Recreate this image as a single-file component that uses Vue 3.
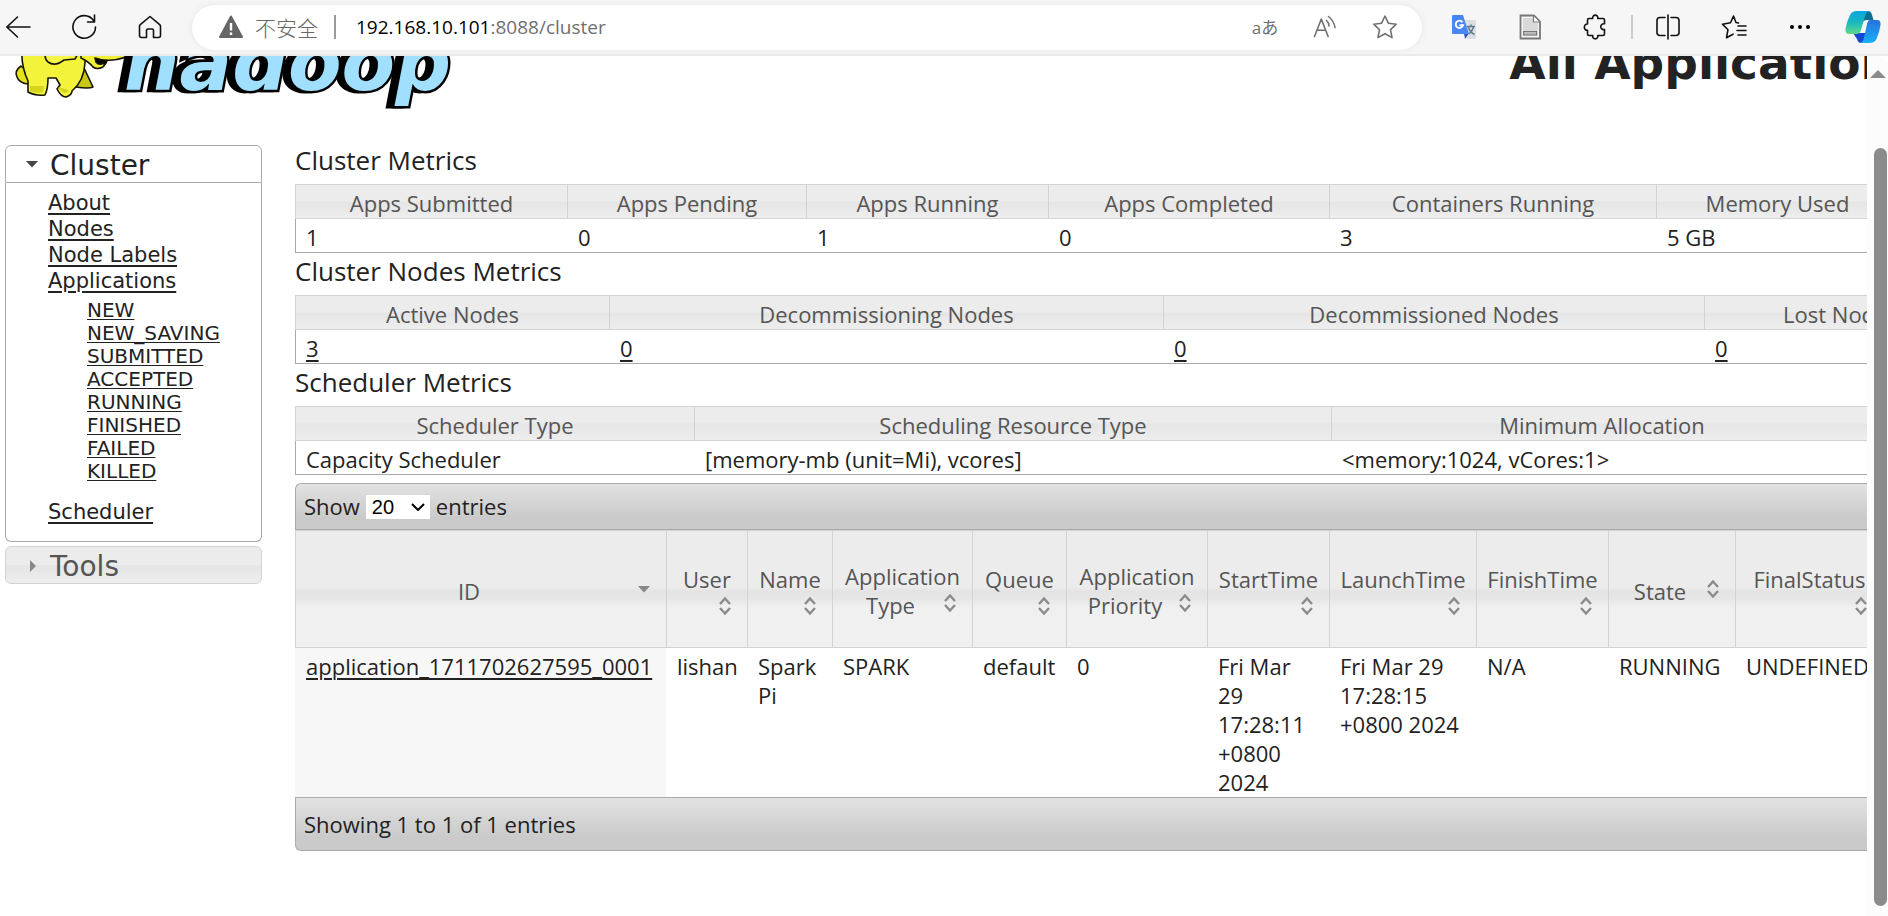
<script setup>
import { ref } from 'vue'

const pageSize = ref('20')

const clusterLinks = ['About', 'Nodes', 'Node Labels', 'Applications']
const stateLinks = ['NEW', 'NEW_SAVING', 'SUBMITTED', 'ACCEPTED', 'RUNNING', 'FINISHED', 'FAILED', 'KILLED']

const metrics = [
  {
    title: 'Cluster Metrics',
    columns: [
      { name: 'Apps Submitted', value: '1', width: 272 },
      { name: 'Apps Pending', value: '0', width: 239 },
      { name: 'Apps Running', value: '1', width: 242 },
      { name: 'Apps Completed', value: '0', width: 281 },
      { name: 'Containers Running', value: '3', width: 327 },
      { name: 'Memory Used', value: '5 GB', width: 242 }
    ]
  },
  {
    title: 'Cluster Nodes Metrics',
    linked: true,
    columns: [
      { name: 'Active Nodes', value: '3', width: 314 },
      { name: 'Decommissioning Nodes', value: '0', width: 554 },
      { name: 'Decommissioned Nodes', value: '0', width: 541 },
      { name: 'Lost Nodes', value: '0', width: 272 }
    ]
  },
  {
    title: 'Scheduler Metrics',
    columns: [
      { name: 'Scheduler Type', value: 'Capacity Scheduler', width: 399 },
      { name: 'Scheduling Resource Type', value: '[memory-mb (unit=Mi), vcores]', width: 637 },
      { name: 'Minimum Allocation', value: '<memory:1024, vCores:1>', width: 541 }
    ]
  }
]

// "top" lines sit above the row that holds the sort arrow; "side" shares that row.
const appColumns = [
  { top: '', side: 'ID', width: 371, sorted: true },
  { top: 'User', side: '', width: 81 },
  { top: 'Name', side: '', width: 85 },
  { top: 'Application', side: 'Type', width: 140 },
  { top: 'Queue', side: '', width: 94 },
  { top: 'Application', side: 'Priority', width: 141 },
  { top: 'StartTime', side: '', width: 122 },
  { top: 'LaunchTime', side: '', width: 147 },
  { top: 'FinishTime', side: '', width: 132 },
  { top: '', side: 'State', width: 127 },
  { top: 'FinalStatus', side: '', width: 148 }
]
const appCells = [
  ['lishan'],
  ['Spark', 'Pi'],
  ['SPARK'],
  ['default'],
  ['0'],
  ['Fri Mar', '29', '17:28:11', '+0800', '2024'],
  ['Fri Mar 29', '17:28:15', '+0800 2024'],
  ['N/A'],
  ['RUNNING'],
  ['UNDEFINED']
]
</script>

<template>
  <div class="browser">
    <header class="toolbar">
      <nav class="nav-group" aria-label="Browser navigation">
        <button class="tool" aria-label="Back">
          <svg width="26" height="24" viewBox="0 0 26 24" class="line"><path d="M25 12H2M12.500 2 1.800 12l10.700 10" /></svg>
        </button>
        <button class="tool" aria-label="Refresh">
          <svg width="26" height="26" viewBox="0 0 26 26" class="line"><path d="M22.500 6.500A11.300 11.300 0 1 0 24.500 13M23.500 1v7h-7" /></svg>
        </button>
        <button class="tool" aria-label="Home">
          <svg width="24" height="24" viewBox="0 0 24 24" class="line"><path d="M12 1.500 2.300 9.600Q1.500 10.300 1.500 11.500V20.500Q1.500 22.500 3.500 22.500H8.500V15.500Q8.500 14 10 14h4q1.500 0 1.500 1.500v7H20.500Q22.500 22.500 22.500 20.500V11.500q0-1.200-.8-1.900z" /></svg>
        </button>
      </nav>
      <div class="address">
        <svg class="warn" width="26" height="24" viewBox="0 0 26 24"><path d="M13 1.500 24 22H2z" fill="#666" stroke="#666" stroke-width="2" stroke-linejoin="round" /><path d="M13 8v7.500M13 17.500v2.500" stroke="#fff" stroke-width="2.400" /></svg>
        <span class="insecure">不安全</span>
        <span class="bar"></span>
        <a class="url" href="#">192.168.10.101<span>:8088/cluster</span></a>
        <div class="address-actions">
          <button class="tool translate" aria-label="Translate page">aあ</button>
          <button class="tool" aria-label="Read aloud">
            <svg width="26" height="26" viewBox="0 0 26 26" class="line grey"><path d="M2.500 22.500 9.300 5l6.800 17.500M5 16.300h8.700M14.500 6.500q2.500 2 2.500 5.500M16.500 2.500q5.500 4.500 6.500 11" /></svg>
          </button>
          <button class="tool" aria-label="Add to favorites">
            <svg width="26" height="26" viewBox="0 0 26 26" class="line grey"><path d="M13 2l3.400 7.200 7.900 1-5.800 5.500 1.500 7.900-7-3.800-7 3.800 1.500-7.900L1.700 10.200l7.900-1z" /></svg>
          </button>
        </div>
      </div>
      <div class="extensions">
        <button class="tool" aria-label="Google Translate">
          <svg width="26" height="26" viewBox="0 0 26 26"><path d="M11 6h13q1 0 1 1v17q0 1-1 1H16z" fill="#dcdee1" /><path d="M13 19h5l-4 6z" fill="#2a4fc4" /><path d="M2 1h10l6 19H2q-1 0-1-1V2q0-1 1-1z" fill="#4787f3" /><path d="M11.500 8.200A3.700 3.700 0 1 0 12 11.300H8.500" fill="none" stroke="#fff" stroke-width="1.900" /><path d="M16 12.500h8M20 10.500v2M17.500 13q1 5 6 7.500M22.500 13q-1 4-4.500 7" fill="none" stroke="#607d8b" stroke-width="1.500" /></svg>
        </button>
        <button class="tool" aria-label="Document extension">
          <svg width="24" height="26" viewBox="0 0 24 26"><path d="M2.500 1.500h13.500l6 6v17h-19.500z" fill="#f5f5f5" stroke="#777" stroke-width="1.800" /><path d="M5 4h10v5h5v13H5z" fill="#d9d9d9" /><path d="M15.500 2v6H21" fill="#fff" stroke="#777" stroke-width="1.200" /><rect x="5.500" y="17.500" width="13" height="3.500" fill="#bbb" stroke="#777" /></svg>
        </button>
        <button class="tool" aria-label="Extensions">
          <svg width="26" height="26" viewBox="0 0 26 26" class="line"><path d="M6 4.500H9.700C9 0 15.500 0 14.800 4.500H20Q21.500 4.500 21.500 6V9.800C16.500 9 16.500 16.500 21.500 15.500V20Q21.500 21.500 20 21.500H14.800C15.500 26 9 26 9.700 21.500H6Q4.500 21.500 4.500 20V16.300C.3 16.500 .3 9.800 4.500 10V6Q4.500 4.500 6 4.500z" /></svg>
        </button>
        <span class="divider"></span>
        <button class="tool" aria-label="Split screen">
          <svg width="26" height="26" viewBox="0 0 26 26" class="line"><path d="M13 1v24M10 3.500H5Q2 3.500 2 6.500v12Q2 21.500 5 21.500h5M16 3.500h5q3 0 3 3v12q0 3-3 3h-5" /></svg>
        </button>
        <button class="tool" aria-label="Favorites">
          <svg width="26" height="26" viewBox="0 0 26 26" class="line"><path d="M17.500 9 15 8.500 12.500 2 9.500 8.800 1.500 10.200l5.500 5.500-1.500 8 6.500-3.500M17 12h8M16 16.500h9M17 21h8" /></svg>
        </button>
        <button class="tool" aria-label="Settings and more">
          <svg width="24" height="8" viewBox="0 0 24 8"><circle cx="4" cy="4" r="2" /><circle cx="12" cy="4" r="2" /><circle cx="20" cy="4" r="2" /></svg>
        </button>
        <button class="tool" aria-label="Copilot">
          <svg width="36" height="34" viewBox="0 0 36 34">
            <defs>
              <linearGradient id="cpTeal" x1="0" y1="0" x2="0" y2="1"><stop offset="0" stop-color="#0aa5e2" /><stop offset=".5" stop-color="#19b9bd" /><stop offset="1" stop-color="#5fd98a" /></linearGradient>
              <linearGradient id="cpBlue" x1="0" y1="0" x2="0" y2="1"><stop offset="0" stop-color="#2673dc" /><stop offset="1" stop-color="#19b0f7" /></linearGradient>
            </defs>
            <path d="M18 1h5q3 0 4 4l1.500 5H22q-4 0-5 4z" fill="#0b6f93" />
            <path d="M8 23h13l-3 10h-2q-3 0-4-4z" fill="#1648d6" />
            <path d="M12 1h12q-3 1-4 5l-4 14q-1 4-5 4H4q-4 0-3.500-5Q1.500 12 5 5q2-4 7-4z" fill="url(#cpTeal)" />
            <path d="M25 10h7q4 0 3.500 5-1 7-4 14-2 4-7 4H15q3-1 4-5l3-14q1-4 3-4z" fill="url(#cpBlue)" />
          </svg>
        </button>
      </div>
    </header>

    <div class="viewport">
      <div class="page">
        <div class="masthead">
          <a href="#" class="logo" aria-label="hadoop">
            <svg width="460" height="56" viewBox="0 56 460 56">
              <g stroke="#161600" stroke-width="1.600" stroke-linejoin="round">
                <path d="M21 66q-7 5-4 11 2 6 11 7l5-8z" fill="#e3e31c" />
                <path d="M84 68l9 19q-4 2-17 0l-6-6z" fill="#c9c914" />
                <path d="M22 50q-1 16 6 31l0 11q7 4 17 3 3-6 3-17h8l4 7-3 4q4 8 9 8 6-2 6-6 12-10 13-28V50z" fill="#f3f33c" />
                <path d="M94 59q-1 5 2 8 8 2 11-6V56H94z" fill="#050500" />
                <path d="M81 50v8q7 3 12 9 4 3 10 0 2-2 1-4-5 3-8-1l-1-4q14 5 31-1V50z" fill="#f0f03a" />
                <path d="M47 50q-4 8 1 12 7 5 16-2l11-1 5-9z" fill="#f6f64a" />
              </g>
              <path d="M30 86l0 5q7 3 13 1l1-6zM58 87q4 6 8 6l3-3z" fill="#c8c812" opacity=".7" />
              <text x="124" y="90" class="wordmark">hadoop</text>
            </svg>
          </a>
          <h1>All Applications</h1>
        </div>

        <div class="columns">
          <aside class="sidebar">
            <button class="section open">
              <svg width="12" height="12" viewBox="0 0 12 12"><path d="M0 2h12L6 8.500z" fill="#454545" /></svg>Cluster
            </button>
            <nav class="links" aria-label="Cluster">
              <a v-for="link in clusterLinks" :key="link" href="#">{{ link }}</a>
              <div class="states">
                <a v-for="link in stateLinks" :key="link" href="#">{{ link }}</a>
              </div>
              <a href="#">Scheduler</a>
            </nav>
            <button class="section closed">
              <svg width="12" height="12" viewBox="0 0 12 12"><path d="M4 0v12l6-6z" fill="#888" /></svg>Tools
            </button>
          </aside>

          <main class="content">
            <section v-for="table in metrics" :key="table.title">
              <h2>{{ table.title }}</h2>
              <table class="metrics" :aria-label="table.title">
                <colgroup>
                  <col v-for="c in table.columns" :key="c.name" :style="{ width: c.width + 'px' }" />
                </colgroup>
                <thead>
                  <tr><th v-for="c in table.columns" :key="c.name" scope="col">{{ c.name }}</th></tr>
                </thead>
                <tbody>
                  <tr>
                    <td v-for="c in table.columns" :key="c.name">
                      <a v-if="table.linked" href="#">{{ c.value }}</a>
                      <template v-else>{{ c.value }}</template>
                    </td>
                  </tr>
                </tbody>
              </table>
            </section>

            <div class="apps">
              <div class="apps-bar top">
                <label for="page-size">Show</label>
                <span class="select">
                  <select id="page-size" v-model="pageSize">
                    <option>20</option><option>40</option><option>60</option><option>80</option><option>100</option>
                  </select>
                  <svg width="14" height="8" viewBox="0 0 14 8"><path d="M1 1l6 6 6-6" fill="none" stroke="#000" stroke-width="2" /></svg>
                </span>
                <span>entries</span>
              </div>
              <table class="apps-table" aria-label="Applications">
                <colgroup>
                  <col v-for="(c, i) in appColumns" :key="i" :style="{ width: c.width + 'px' }" />
                </colgroup>
                <thead>
                  <tr>
                    <th v-for="(c, i) in appColumns" :key="i" scope="col">
                      <button class="sort">
                        <span v-if="c.top">{{ c.top }}</span>
                        <span class="sort-row">
                          <span class="sort-text">{{ c.side }}</span>
                          <svg width="24" height="24" viewBox="0 0 24 24">
                            <path v-if="c.sorted" d="M6 9h12l-6 6.500z" fill="#888" />
                            <path v-else d="M7 10l5-5.500 5 5.500M7 14l5 5.500 5-5.500" fill="none" stroke="#8b8b8b" stroke-width="2.400" />
                          </svg>
                        </span>
                      </button>
                    </th>
                  </tr>
                </thead>
                <tbody>
                  <tr>
                    <td class="sorted"><a href="#">application_1711702627595_0001</a></td>
                    <td v-for="(lines, i) in appCells" :key="i">
                      <div v-for="line in lines" :key="line">{{ line }}</div>
                    </td>
                  </tr>
                </tbody>
              </table>
              <div class="apps-bar bottom">Showing 1 to 1 of 1 entries</div>
            </div>
          </main>
        </div>
      </div>
      <div class="scrollbar" aria-hidden="true">
        <svg width="16" height="8" viewBox="0 0 16 8"><path d="M0 8 8 0l8 8z" fill="#8b8b8b" /></svg>
        <span class="thumb"></span>
      </div>
    </div>
  </div>
</template>

<style>
html,
body {
  overflow: hidden;
  background: #fff;
}
</style>

<style scoped>
.browser {
  display: flex;
  flex-direction: column;
  height: 100vh;
  color: #222;
  font-family: "Open Sans", "Noto Sans", "Noto Sans CJK SC", sans-serif;
  font-size: 22px;
  line-height: 29px;
}
button {
  font: inherit;
  color: inherit;
  border: 0;
  padding: 0;
  background: none;
}
a {
  color: #222;
}
.toolbar {
  display: flex;
  align-items: center;
  flex: none;
  height: 54px;
  border-bottom: 2px solid #ebebeb;
  background: #f6f6f6;
}
.nav-group {
  display: flex;
  gap: 30px;
}
.tool {
  display: flex;
  flex: none;
  align-items: center;
  justify-content: center;
  width: 36px;
  height: 36px;
}
.line {
  fill: none;
  stroke: #111;
  stroke-width: 1.6;
  stroke-linecap: round;
  stroke-linejoin: round;
}
.grey {
  stroke: #707070;
}
.address {
  display: flex;
  flex: 1;
  align-items: center;
  height: 45px;
  margin: 0 24px;
  padding: 0 19px 0 26px;
  border-radius: 23px;
  background: #fff;
  box-shadow: 0 0 6px #e6e6e6;
}
.insecure {
  margin-left: 11px;
  color: #666;
  font-family: "Noto Sans CJK SC", sans-serif;
  font-size: 21px;
  font-weight: 300;
}
.bar {
  width: 2px;
  height: 24px;
  margin: 0 20px 0 16px;
  background: #999;
}
.url {
  color: #000;
  font-size: 19px;
  text-decoration: none;
}
.url span {
  color: #707070;
}
.address-actions {
  display: flex;
  gap: 24px;
  margin-left: auto;
}
.translate {
  color: #707070;
  font-family: "Open Sans", "Noto Sans CJK JP", sans-serif;
  font-size: 17px;
}
.extensions {
  display: flex;
  align-items: center;
  padding-right: 7px;
}
.extensions .tool + .tool {
  margin-left: 30px;
}
.extensions .tool:last-child {
  margin-left: 27px;
}
.divider {
  width: 2px;
  height: 24px;
  margin: 0 17px;
  background: #ccc;
}
.viewport {
  display: flex;
  flex: 1;
  min-height: 0;
}
.page {
  flex: 1;
  min-width: 0;
  overflow: hidden;
}
.masthead {
  display: flex;
  align-items: flex-start;
  justify-content: space-between;
  height: 56px;
}
.logo svg {
  display: block;
}
.wordmark {
  fill: #a0dffe;
  stroke: #000;
  stroke-width: 5px;
  paint-order: stroke;
  font: italic bold 78px "DejaVu Sans", sans-serif;
  filter: drop-shadow(-6px 0 0 #000);
}
h1 {
  margin: -16px -55px 0 0;
  font: bold 47px/46px "DejaVu Sans", sans-serif;
  white-space: nowrap;
}
.columns {
  display: flex;
  gap: 33px;
  padding: 33px 0 0 5px;
}
.sidebar {
  flex: none;
  width: 257px;
  font-family: "DejaVu Sans", sans-serif;
}
.section {
  display: flex;
  align-items: center;
  gap: 12px;
  box-sizing: border-box;
  width: 100%;
  height: 38px;
  padding: 2px 0 0 20px;
  border: 1px solid #d3d3d3;
  font-size: 28px;
}
.section.open {
  border-color: #aaa;
  border-radius: 6px 6px 0 0;
}
.section.closed {
  margin-top: 4px;
  border-radius: 6px;
  color: #555;
  background: linear-gradient(#ececec 50%, #e5e5e5 52%, #eee);
}
.links {
  display: flex;
  flex-direction: column;
  align-items: flex-start;
  padding: 7px 0 16px 42px;
  border: 1px solid #aaa;
  border-top: 0;
  border-radius: 0 0 6px 6px;
  font-size: 21px;
  line-height: 26px;
}
.links a {
  text-underline-offset: 3px;
  text-decoration-thickness: 2px;
  text-decoration-skip-ink: auto;
}
.states {
  display: flex;
  flex-direction: column;
  align-items: flex-start;
  margin: 5px 0 16px 39px;
  font-size: 20px;
  line-height: 23px;
}
.states a {
  text-underline-offset: 2px;
  text-decoration-thickness: 1px;
}
.content {
  flex: 1;
  min-width: 0;
  white-space: nowrap;
}
h2 {
  margin: 0;
  padding: 0 0 9px;
  font-size: 26px;
  font-weight: 400;
  line-height: 30px;
}
section + section h2 {
  padding-top: 3px;
}
table {
  width: 100%;
  table-layout: fixed;
  border-collapse: separate;
  border-spacing: 0;
}
th {
  border-top: 1px solid #d3d3d3;
  border-bottom: 1px solid #d3d3d3;
  border-left: 1px solid #d3d3d3;
  padding: 0 10px;
  color: #555;
  font-weight: 400;
  text-align: center;
}
td {
  padding: 0 0 0 11px;
  text-align: left;
  vertical-align: top;
}
td a {
  text-underline-offset: 3px;
  text-decoration-thickness: 2px;
}
.metrics {
  border-bottom: 1px solid #aaa;
}
.metrics th {
  padding-top: 4px;
  background: linear-gradient(#ececec 48%, #e5e5e5 52%, #eee);
}
.metrics td {
  padding-top: 4px;
}
.metrics td:first-child {
  border-left: 1px solid #aaa;
  padding-left: 10px;
}
.apps {
  margin-top: 8px;
}
.apps-bar {
  display: flex;
  align-items: center;
  gap: 6px;
  box-sizing: border-box;
  padding-left: 8px;
  border: 1px solid #aaa;
  border-right: 0;
  background: linear-gradient(#e2e2e2, #cacaca 75%);
}
.apps-bar.top {
  height: 47px;
  border-radius: 6px 0 0 0;
}
.apps-bar.bottom {
  height: 54px;
  border-radius: 0 0 0 6px;
}
.select {
  display: flex;
  align-items: center;
  position: relative;
}
select {
  appearance: none;
  width: 64px;
  height: 24px;
  padding: 0 6px;
  border: 0;
  border-radius: 0;
  color: #000;
  background: #fff;
  font: 20px/24px "Liberation Sans", sans-serif;
}
.select svg {
  position: absolute;
  right: 5px;
  pointer-events: none;
}
.apps-table th {
  height: 116px;
  background: linear-gradient(#ececec 48%, #e4e4e4 52%, #e6e6e6 58%, #f0f0f0 66%);
}
.sort {
  display: block;
  width: 100%;
  padding-top: 4px;
}
.sort > span {
  display: block;
}
.sort > .sort-row {
  display: flex;
  align-items: flex-start;
}
.sort-text {
  flex: 1;
}
.apps-table td {
  padding-top: 4px;
}
.apps-table .sorted {
  background: #f7f7f7;
}
.scrollbar {
  display: flex;
  flex: none;
  flex-direction: column;
  align-items: center;
  width: 21px;
  padding: 14px 0 10px;
  box-sizing: border-box;
  border-radius: 0 12px 0 0;
  background: #fcfcfc;
}
.thumb {
  flex: 1;
  width: 13px;
  margin-top: 70px;
  margin-left: 6px;
  border-radius: 7px;
  background: #8b8b8b;
}
</style>
